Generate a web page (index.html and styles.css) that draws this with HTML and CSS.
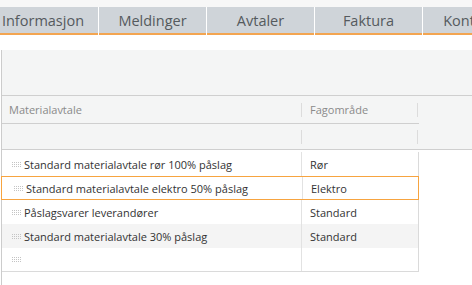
FILE: index.html
```html
<!DOCTYPE html>
<html lang="no">
<head>
<meta charset="utf-8">
<link rel="stylesheet" href="styles.css">
</head>
<body>
<div class="topstrip"></div>
<nav class="tabs">
  <div class="tab">Informasjon</div>
  <div class="tab">Meldinger</div>
  <div class="tab">Avtaler</div>
  <div class="tab">Faktura</div>
  <div class="tab">Kontakter</div>
</nav>
<div class="spacer"></div>
<section class="panel">
  <div class="head">
    <div class="toolbar"></div>
    <div class="hrow">
      <div class="hcell c1">Materialavtale</div>
      <div class="hcell c2">Fagområde</div>
    </div>
    <div class="frow">
      <div class="fcell c1"></div>
      <div class="fcell c2"></div>
    </div>
  </div>
  <div class="body">
    <div class="row">
      <div class="cell c1"><span class="grip"></span>Standard materialavtale rør 100% påslag</div>
      <div class="cell c2">Rør</div>
    </div>
    <div class="row sel">
      <div class="cell c1"><span class="grip"></span>Standard materialavtale elektro 50% påslag</div>
      <div class="cell c2">Elektro</div>
    </div>
    <div class="row">
      <div class="cell c1"><span class="grip"></span>Påslagsvarer leverandører</div>
      <div class="cell c2">Standard</div>
    </div>
    <div class="row alt">
      <div class="cell c1"><span class="grip"></span>Standard materialavtale 30% påslag</div>
      <div class="cell c2">Standard</div>
    </div>
    <div class="row last">
      <div class="cell c1"><span class="grip"></span></div>
      <div class="cell c2"></div>
    </div>
  </div>
</section>
</body>
</html>
```
FILE: styles.css
```css
html, body {
  margin: 0;
  padding: 0;
  background: #ffffff;
  font-family: "Open Sans", "Liberation Sans", sans-serif;
  overflow: hidden;
}
.topstrip {
  height: 7px;
  background: #f7f7f7;
}
.tabs {
  display: flex;
  margin-left: -9px;
  gap: 1px;
  white-space: nowrap;
}
.tab {
  flex: 0 0 107px;
  height: 26px;
  box-sizing: content-box;
  background: #cfd4d9;
  border-bottom: 2px solid #f3a551;
  color: #555a5e;
  font-size: 14.5px;
  line-height: 27px;
  text-align: center;
  overflow: hidden;
}
.tab:first-child {
  text-indent: -3px;
}
.spacer {
  height: 15px;
}
.panel {
  margin-left: 1px;
  border-left: 1px solid #cccccc;
  height: 240px;
}
.head {
  background: #f4f5f5;
  border-bottom: 1px solid #cfcfcf;
}
.toolbar {
  height: 45px;
  border-bottom: 1px solid #cfcfcf;
}
.hrow, .frow {
  display: flex;
  width: 417px;
}
.hrow {
  height: 27px;
  border-bottom: 1px solid #cfcfcf;
  align-items: center;
}
.frow {
  height: 25px;
  align-items: center;
}
.hcell, .fcell {
  height: 14px;
  font-size: 11px;
  line-height: 14px;
  color: #8a8a8a;
  box-sizing: border-box;
}
.hcell.c1, .fcell.c1 {
  width: 300px;
  padding-left: 7px;
  border-right: 1px solid #dcdcdc;
}
.hcell.c2, .fcell.c2 {
  width: 116px;
  padding-left: 8px;
  border-right: 1px solid #dcdcdc;
}
.body {
  padding-top: 2px;
  width: 417px;
}
.row {
  display: flex;
  height: 24px;
  box-sizing: border-box;
  border-right: 1px solid #dadada;
  font-size: 11px;
  color: #333333;
}
.row.alt {
  background: #f4f4f4;
}
.row.last {
  border-bottom: 1px solid #dadada;
}
.row.sel {
  border: 1px solid #f7a440;
  margin-left: -1px;
  width: 418px;
}
.cell {
  display: flex;
  align-items: center;
  box-sizing: border-box;
  white-space: nowrap;
  overflow: hidden;
}
.cell.c1 {
  width: 300px;
  padding-left: 10px;
  border-right: 1px solid #e2e2e2;
}
.row.sel .cell.c1 {
  padding-left: 12px;
  width: 301px;
}
.cell.c2 {
  flex: 1;
  padding-left: 8px;
}
.grip {
  width: 9px;
  height: 5px;
  margin-right: 3px;
  flex: 0 0 9px;
  background-image: radial-gradient(circle at 0.5px 0.5px, #c4c4c4 0.7px, transparent 0.8px);
  background-size: 2px 2px;
}
```
